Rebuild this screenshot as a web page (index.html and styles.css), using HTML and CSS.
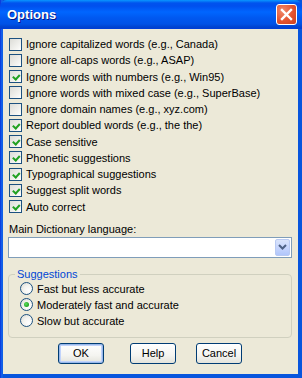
FILE: index.html
```html
<!DOCTYPE html>
<html>
<head>
<meta charset="utf-8">
<link rel="stylesheet" href="styles.css">
</head>
<body>
<div class="window">
  <div class="titlebar">
    <span class="title">Options</span>
    <span class="close">
      <svg width="13" height="13" viewBox="0 0 13 13"><path d="M2 2 L11 11 M11 2 L2 11" stroke="#fff" stroke-width="2.4" stroke-linecap="square"/></svg>
    </span>
  </div>
  <div class="client">
    <div class="checks">
      <div class="row"><span class="cb"></span><span class="lbl">Ignore capitalized words (e.g., Canada)</span></div>
      <div class="row"><span class="cb"></span><span class="lbl">Ignore all-caps words (e.g., ASAP)</span></div>
      <div class="row"><span class="cb on"></span><span class="lbl">Ignore words with numbers (e.g., Win95)</span></div>
      <div class="row"><span class="cb"></span><span class="lbl">Ignore words with mixed case (e.g., SuperBase)</span></div>
      <div class="row"><span class="cb"></span><span class="lbl">Ignore domain names (e.g., xyz.com)</span></div>
      <div class="row"><span class="cb on"></span><span class="lbl">Report doubled words (e.g., the the)</span></div>
      <div class="row"><span class="cb on"></span><span class="lbl">Case sensitive</span></div>
      <div class="row"><span class="cb on"></span><span class="lbl">Phonetic suggestions</span></div>
      <div class="row"><span class="cb on"></span><span class="lbl">Typographical suggestions</span></div>
      <div class="row"><span class="cb on"></span><span class="lbl">Suggest split words</span></div>
      <div class="row"><span class="cb on"></span><span class="lbl">Auto correct</span></div>
    </div>
    <div class="dictlabel">Main Dictionary language:</div>
    <div class="combo">
      <span class="combo-btn">
        <svg width="9" height="6" viewBox="0 0 9 6"><path d="M1 1 L4.5 4.5 L8 1" stroke="#4d6185" stroke-width="2" fill="none"/></svg>
      </span>
    </div>
    <div class="group">
      <div class="legend">Suggestions</div>
      <div class="rrow"><span class="radio"></span><span class="lbl">Fast but less accurate</span></div>
      <div class="rrow"><span class="radio on"></span><span class="lbl">Moderately fast and accurate</span></div>
      <div class="rrow"><span class="radio"></span><span class="lbl">Slow but accurate</span></div>
    </div>
    <div class="buttons">
      <span class="btn default">OK</span>
      <span class="btn help">Help</span>
      <span class="btn">Cancel</span>
    </div>
  </div>
</div>
</body>
</html>
```
FILE: styles.css
```css
html, body { margin: 0; padding: 0; }
body { width: 302px; height: 378px; overflow: hidden; background: #fff; }
.window {
  width: 302px; height: 378px; box-sizing: border-box;
  background: linear-gradient(to right, #0831d9 0, #166aee 2px, #0855dd 3px);
  padding: 0 4px 4px 3px;
  display: flex; flex-direction: column;
  font-family: "Liberation Sans", Arial, sans-serif; font-size: 11px; color: #000;
}
.titlebar {
  height: 29px; flex: none; margin: 0 -4px 0 -3px; padding: 0 4px 0 7px;
  border-radius: 7px 7px 0 0;
  background: linear-gradient(to bottom, #0997ff 0, #0053ee 3px, #0050ee 6px, #0066ff 12px, #0058f0 18px, #0052e6 24px, #0043cf 27px, #003dd7 29px);
  display: flex; align-items: center; justify-content: space-between;
}
.title {
  color: #fff; font-family: "Liberation Sans", Arial, sans-serif; font-weight: bold; font-size: 13px;
  text-shadow: 1px 1px 0 #0a1883; letter-spacing: 0;
}
.close {
  width: 21px; height: 21px; box-sizing: border-box; margin-right: 1px;
  border: 1px solid #fff; border-radius: 3px;
  background: radial-gradient(circle at 30% 30%, #f08a6c 0, #e4532f 55%, #c9401f 100%);
  display: flex; align-items: center; justify-content: center;
}
.client {
  flex: 1; background: #ece9d8; display: flex; flex-direction: column;
  padding: 7px 5px 0 5px;
}
.checks { display: flex; flex-direction: column; }
.row { height: 16.25px; display: flex; align-items: center; padding-left: 1px; }
.cb {
  width: 13px; height: 13px; box-sizing: border-box; flex: none;
  border: 1px solid #1c5180;
  background: linear-gradient(135deg, #dcdcd7 0, #f5f5f2 75%, #ffffff 100%);
  margin-right: 4px; position: relative;
}
.cb.on::after {
  content: ""; position: absolute; left: 2px; top: 1px; width: 5px; height: 3px;
  border-left: 2px solid #21a121; border-bottom: 2px solid #21a121;
  transform: rotate(-48deg) translate(-1px, 2px);
}
.dictlabel { margin-top: 7px; padding-left: 1px; height: 14px; line-height: 14px; }
.combo {
  height: 21px; box-sizing: border-box; border: 1px solid #7f9db9; background: #fff;
  margin: 1px 1px 0 0; display: flex; justify-content: flex-end; align-items: center; padding-right: 1px;
}
.combo-btn {
  width: 15px; height: 17px; box-sizing: border-box; border: 1px solid #b9caf3; border-radius: 2px;
  background: linear-gradient(to bottom, #dae4fb 0, #c3d3fd 60%, #b0c6fb 100%);
  display: flex; align-items: center; justify-content: center;
}
.group {
  margin: 16px 1px 0 0; border: 1px solid #d0d0bf; border-radius: 4px;
  padding: 6px 0 5px 11px; position: relative; height: 51px;
}
.legend {
  position: absolute; top: -8px; left: 6px; padding: 0 2px; background: #ece9d8; color: #0046d5;
  line-height: 14px;
}
.rrow { height: 16px; display: flex; align-items: center; }
.radio {
  width: 13px; height: 13px; box-sizing: border-box; border-radius: 50%;
  border: 1px solid #1c5180;
  background: radial-gradient(circle at 70% 70%, #ffffff 0, #f2f2ee 50%, #d6d6ce 100%);
  margin-right: 4px; position: relative; flex: none;
}
.radio.on::after {
  content: ""; position: absolute; left: 3px; top: 3px; width: 5px; height: 5px; border-radius: 50%;
  background: radial-gradient(circle at 40% 40%, #5ee05e 0, #21a121 70%);
}
.buttons { display: flex; margin-top: 5px; padding-left: 50px; }
.btn {
  width: 46px; height: 21px; box-sizing: border-box; border: 1px solid #003c74; border-radius: 3px;
  background: linear-gradient(to bottom, #ffffff 0, #f4f4f0 60%, #e3e3db 100%);
  display: flex; align-items: center; justify-content: center; margin-right: 26px;
}
.btn.help { margin-right: 20px; }
.btn.default { box-shadow: inset 0 0 0 1px #98b8ea, inset 0 0 0 2px #c1d3fb; }
```
